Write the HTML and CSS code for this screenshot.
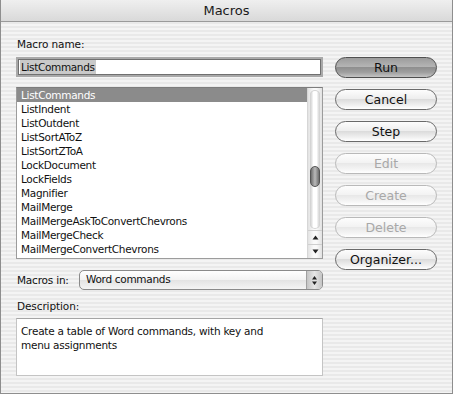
FILE: index.html
```html
<!DOCTYPE html>
<html lang="en">
<head>
    <meta charset="UTF-8">
    <title>Macros</title>
    <link rel="stylesheet" href="styles.css">
</head>
<body>
    <div class="window">
        <div class="titlebar">Macros</div>
        <div class="content">
            <div class="main">
                <div class="label">Macro name:</div>
                <div class="name-field"><span class="selected-text">ListCommands</span></div>

                <div class="listbox">
                    <ul class="items">
                        <li class="active">ListCommands</li>
                        <li>ListIndent</li>
                        <li>ListOutdent</li>
                        <li>ListSortAToZ</li>
                        <li>ListSortZToA</li>
                        <li>LockDocument</li>
                        <li>LockFields</li>
                        <li>Magnifier</li>
                        <li>MailMerge</li>
                        <li>MailMergeAskToConvertChevrons</li>
                        <li>MailMergeCheck</li>
                        <li>MailMergeConvertChevrons</li>
                    </ul>
                    <div class="scrollbar">
                        <div class="track">
                            <div class="thumb"></div>
                        </div>
                        <div class="arrow">
                            <svg width="7" height="5" viewBox="0 0 7 5"><path d="M3.5 0.5 L6.5 4.5 L0.5 4.5 Z" fill="#222"/></svg>
                        </div>
                        <div class="arrow">
                            <svg width="7" height="5" viewBox="0 0 7 5"><path d="M0.5 0.5 L6.5 0.5 L3.5 4.5 Z" fill="#222"/></svg>
                        </div>
                    </div>
                </div>

                <div class="macros-in">
                    <span>Macros in:</span>
                    <div class="popup">
                        <span class="popup-value">Word commands</span>
                        <span class="stepper">
                            <svg width="7" height="11" viewBox="0 0 7 11">
                                <path d="M3.5 1 L6 4.5 L1 4.5 Z" fill="#222"/>
                                <path d="M1 6.5 L6 6.5 L3.5 10 Z" fill="#222"/>
                            </svg>
                        </span>
                    </div>
                </div>

                <div class="label desc-label">Description:</div>
                <div class="description">Create a table of Word commands, with key and<br>menu assignments</div>
            </div>

            <div class="buttons">
                <div class="btn default">Run</div>
                <div class="btn">Cancel</div>
                <div class="btn">Step</div>
                <div class="btn disabled">Edit</div>
                <div class="btn disabled">Create</div>
                <div class="btn disabled">Delete</div>
                <div class="btn">Organizer...</div>
            </div>
        </div>
    </div>
</body>
</html>
```

FILE: styles.css
```css
body {
    margin: 0;
    background-color: #fff;
    font-family: "DejaVu Sans", sans-serif;
    color: #111;
}
.window {
    width: 453px;
    height: 394px;
    box-sizing: border-box;
    border: 1px solid #8e8e8e;
    border-top: none;
    background: repeating-linear-gradient(#f4f4f4 0 2px, #e9e9e9 2px 4px);
}
.titlebar {
    height: 21px;
    line-height: 21px;
    border-bottom: 1px solid #9a9a9a;
    background: linear-gradient(#efefef, #d9d9d9);
    text-align: center;
    font-size: 13px;
    color: #1a1a1a;
}
.content {
    display: flex;
    padding: 15px 0 0 15px;
}
.main {
    width: 307px;
    display: flex;
    flex-direction: column;
}
.label {
    font-size: 10.5px;
    line-height: 14px;
    letter-spacing: -0.1px;
    padding-left: 1px;
}
.name-field {
    margin-top: 6px;
    height: 20px;
    box-sizing: border-box;
    border: 2px solid #a9a9a9;
    box-shadow: inset 0 0 0 1px #707070;
    background-color: #fff;
    padding: 1px 0 0 2px;
    display: flex;
    align-items: flex-start;
}
.selected-text {
    background-color: #c9c9c9;
    font-size: 10.5px;
    line-height: 14px;
    letter-spacing: -0.35px;
    padding: 0 1px;
}
.listbox {
    margin-top: 10px;
    height: 172px;
    box-sizing: border-box;
    border: 1px solid #9c9c9c;
    border-top-color: #7d7d7d;
    background-color: #fff;
    display: flex;
}
.items {
    flex: 1;
    list-style: none;
    margin: 0;
    padding: 0;
    font-size: 10.5px;
    letter-spacing: -0.3px;
}
.items li {
    height: 14px;
    line-height: 14px;
    padding-left: 4px;
}
.items li.active {
    background-color: #8b8b8b;
    color: #fff;
}
.scrollbar {
    width: 14px;
    display: flex;
    flex-direction: column;
    border-left: 1px solid #d6d6d6;
    background: linear-gradient(90deg, #e2e2e2, #fafafa 40%, #fafafa 60%, #e2e2e2);
}
.track {
    flex: 1;
    margin: 2px 2px 1px;
    border-radius: 6px;
    background: linear-gradient(90deg, #c8c8c8, #fff 35%, #fff 65%, #c8c8c8);
    box-shadow: inset 0 0 0 1px #d4d4d4;
    display: flex;
    justify-content: center;
}
.thumb {
    width: 8px;
    height: 19px;
    margin-top: 76px;
    border-radius: 5px;
    border: 1px solid #555;
    background: linear-gradient(90deg, #6d6d6d, #b9b9b9 50%, #6d6d6d);
}
.arrow {
    height: 13px;
    border-top: 1px solid #cfcfcf;
    display: flex;
    align-items: center;
    justify-content: center;
}
.macros-in {
    margin-top: 11px;
    height: 20px;
    display: flex;
    align-items: center;
    font-size: 10.5px;
    letter-spacing: -0.2px;
    padding-left: 1px;
}
.popup {
    margin-left: auto;
    width: 244px;
    height: 20px;
    box-sizing: border-box;
    border: 1px solid #8a8a8a;
    border-radius: 5px;
    background: linear-gradient(#ffffff, #f2f2f2 50%, #e3e3e3 51%, #f4f4f4);
    display: flex;
    align-items: center;
}
.popup-value {
    flex: 1;
    padding-left: 6px;
    letter-spacing: -0.3px;
    margin-top: -3px;
}
.stepper {
    width: 15px;
    height: 18px;
    border-left: 1px solid #a0a0a0;
    border-radius: 0 4px 4px 0;
    background: linear-gradient(90deg, #c4c4c4, #e6e6e6 50%, #c4c4c4);
    display: flex;
    align-items: center;
    justify-content: center;
}
.desc-label {
    margin-top: 9px;
}
.description {
    margin-top: 5px;
    height: 58px;
    box-sizing: border-box;
    border: 1px solid #c4c4c4;
    border-top-color: #a5a5a5;
    background-color: #fff;
    padding: 5px 0 0 4px;
    font-size: 10.5px;
    line-height: 14px;
    letter-spacing: -0.25px;
}
.buttons {
    width: 102px;
    margin-left: 12px;
    padding-top: 20px;
    display: flex;
    flex-direction: column;
    gap: 11px;
}
.btn {
    height: 21px;
    box-sizing: border-box;
    border: 1px solid #6a6a6a;
    border-radius: 11px;
    background: linear-gradient(#fdfdfd, #eeeeee 45%, #dcdcdc 50%, #f0f0f0 80%, #ffffff);
    text-align: center;
    line-height: 19px;
    font-size: 12.5px;
    color: #111;
}
.btn.default {
    border-color: #4f4f4f;
    background: linear-gradient(#9c9c9c, #b4b4b4 45%, #8f8f8f 50%, #9e9e9e 75%, #c4c4c4);
}
.btn.disabled {
    border-color: #b9b9b9;
    color: #a8a8a8;
    background: linear-gradient(#fdfdfd, #f3f3f3 45%, #e8e8e8 50%, #f4f4f4 80%, #fff);
}
```
